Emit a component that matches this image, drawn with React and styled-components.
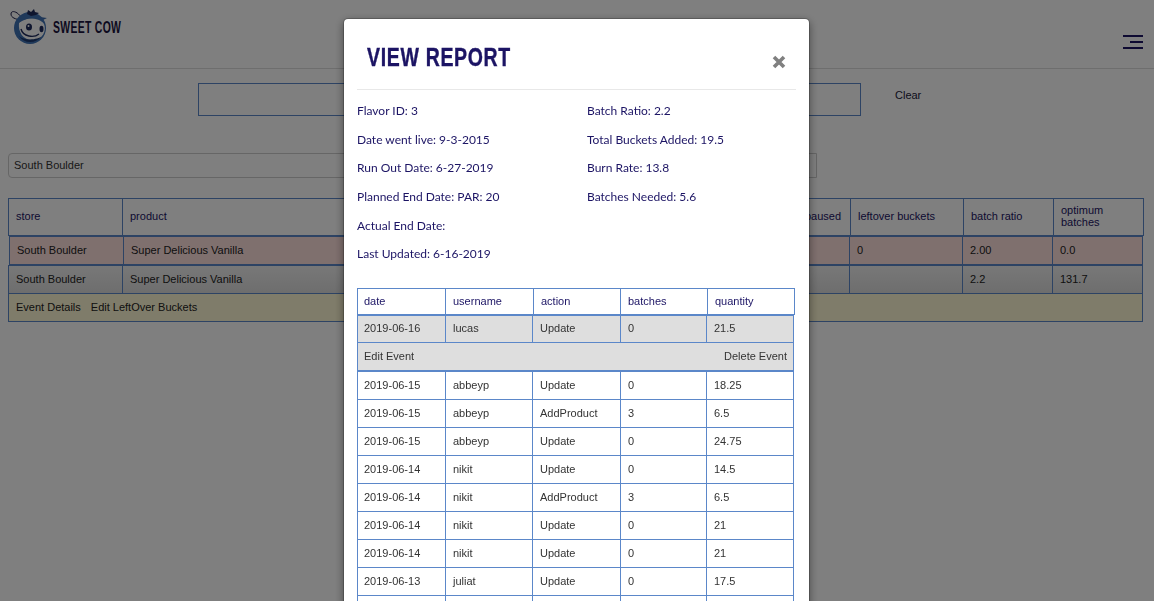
import React from 'react'
import styled, { createGlobalStyle } from 'styled-components'

const reportInfo = [
  ['Flavor ID: 3', 'Batch Ratio: 2.2'],
  ['Date went live: 9-3-2015', 'Total Buckets Added: 19.5'],
  ['Run Out Date: 6-27-2019', 'Burn Rate: 13.8'],
  ['Planned End Date: PAR: 20', 'Batches Needed: 5.6'],
  ['Actual End Date:', ''],
  ['Last Updated: 6-16-2019', ''],
]

const events = [
  ['2019-06-15', 'abbeyp', 'Update', '0', '18.25'],
  ['2019-06-15', 'abbeyp', 'AddProduct', '3', '6.5'],
  ['2019-06-15', 'abbeyp', 'Update', '0', '24.75'],
  ['2019-06-14', 'nikit', 'Update', '0', '14.5'],
  ['2019-06-14', 'nikit', 'AddProduct', '3', '6.5'],
  ['2019-06-14', 'nikit', 'Update', '0', '21'],
  ['2019-06-14', 'nikit', 'Update', '0', '21'],
  ['2019-06-13', 'juliat', 'Update', '0', '17.5'],
  ['', '', '', '', ''],
]

const App = () => {
  return (
    <>
      <GlobalStyle />
      <Header>
        <Logo>
          <CowLogo />
          <LogoText>SWEET COW</LogoText>
        </Logo>
        <Burger aria-label='menu'>
          <span />
          <span />
          <span />
        </Burger>
      </Header>
      <SearchRow>
        <SearchBox />
        <ClearLink>Clear</ClearLink>
      </SearchRow>
      <StoreSelect>South Boulder</StoreSelect>
      <Products>
        <ProductHead>
          <Cell>store</Cell>
          <Cell>product</Cell>
          <Cell>paused</Cell>
          <Cell>leftover buckets</Cell>
          <Cell>batch ratio</Cell>
          <Cell>optimum batches</Cell>
        </ProductHead>
        <ProductRow $inset $bg='#ffe0dd'>
          <Cell>South Boulder</Cell>
          <Cell>Super Delicious Vanilla</Cell>
          <Cell />
          <Cell>0</Cell>
          <Cell>2.00</Cell>
          <Cell>0.0</Cell>
        </ProductRow>
        <ProductRow $bg='linear-gradient(#f0f0f0, #dcdcdc)'>
          <Cell>South Boulder</Cell>
          <Cell>Super Delicious Vanilla</Cell>
          <Cell />
          <Cell />
          <Cell>2.2</Cell>
          <Cell>131.7</Cell>
        </ProductRow>
        <ActionRow>
          <span>Event Details</span>
          <span>Edit LeftOver Buckets</span>
        </ActionRow>
      </Products>

      <Overlay>
        <Modal>
          <ModalHeader>
            <ModalTitle>VIEW REPORT</ModalTitle>
            <CloseButton aria-label='close'>
              <svg width='14' height='14' viewBox='0 0 14 14'>
                <path d='M2 2 L12 12 M12 2 L2 12' stroke='#808080' strokeWidth='3.6' />
              </svg>
            </CloseButton>
          </ModalHeader>
          <InfoGrid>
            {reportInfo.map((row) =>
              row.map((text, i) => <InfoItem key={row[0] + i}>{text}</InfoItem>)
            )}
          </InfoGrid>
          <EventHead>
            <EventCell>date</EventCell>
            <EventCell>username</EventCell>
            <EventCell>action</EventCell>
            <EventCell>batches</EventCell>
            <EventCell>quantity</EventCell>
          </EventHead>
          <EventRow $selected $first>
            <EventCell>2019-06-16</EventCell>
            <EventCell>lucas</EventCell>
            <EventCell>Update</EventCell>
            <EventCell>0</EventCell>
            <EventCell>21.5</EventCell>
          </EventRow>
          <EventActions>
            <span>Edit Event</span>
            <span>Delete Event</span>
          </EventActions>
          {events.map((row, i) => (
            <EventRow key={i} $first={i === 0} $tall={i === 0}>
              {row.map((text, j) => (
                <EventCell key={j}>{text}</EventCell>
              ))}
            </EventRow>
          ))}
        </Modal>
      </Overlay>
    </>
  )
}

const CowLogo = () => (
  <svg width='38' height='38' viewBox='0 0 38 38'>
    <path
      d='M11 9 C7 3 1 2 1 6 C1 10 6 11 10 12'
      fill='none'
      stroke='#1a1c4a'
      strokeWidth='1'
    />
    <path d='M30 9 L37 10 L31 13 Z' fill='#3d6aa8' />
    <circle cx='20' cy='20' r='16' fill='#3f72b4' />
    <path d='M9 15 C13 9 29 9 34 16 C37 23 32 33 22 32 C13 32 8 24 9 15 Z' fill='#fff' />
    <path d='M8 11 C12 5 28 4 32 12 C25 9 14 10 8 16 Z' fill='#3f72b4' />
    <path d='M17 6 L18 2 L21 4 L24 1 L25 4 L29 5 L26 7 L21 8 Z' fill='#1d2a5c' />
    <ellipse cx='19' cy='19' rx='3' ry='3.6' fill='#1d2a5c' />
    <circle cx='18.5' cy='18' r='1' fill='#fff' />
    <ellipse cx='31.5' cy='21' rx='2' ry='3.2' fill='#1d2a5c' />
    <path d='M11 21 C13 29 24 30 29 26' fill='none' stroke='#1d2a5c' strokeWidth='1.4' />
    <path d='M9 28 C14 36 26 36 32 28 C28 32 14 33 9 28 Z' fill='#1d3a70' />
  </svg>
)

const GlobalStyle = createGlobalStyle`
  html, body {
    margin: 0;
    height: 100%;
    overflow: hidden;
    background: #fff;
  }
  body {
    font-family: 'Liberation Sans', Arial, sans-serif;
    font-size: 11px;
    color: #222;
  }
  * {
    box-sizing: border-box;
  }
`

const Header = styled.header`
  display: flex;
  justify-content: space-between;
  align-items: flex-start;
  height: 69px;
  padding: 8px 11px 0 10px;
  border-bottom: 1px solid #ddd;
`
const Logo = styled.div`
  display: flex;
  align-items: center;
  gap: 5px;
  height: 38px;
`
const LogoText = styled.span`
  font-weight: 700;
  font-size: 16px;
  letter-spacing: 0.5px;
  color: #1a1440;
  margin-top: 2px;
  transform: scaleX(0.65);
  transform-origin: left center;
`
const Burger = styled.div`
  display: flex;
  flex-direction: column;
  align-items: flex-end;
  gap: 4px;
  width: 20px;
  margin-top: 27px;
  span {
    display: block;
    width: 100%;
    height: 2px;
    background: #1c1464;
  }
  span:nth-child(2) {
    width: 13px;
  }
`
const SearchRow = styled.div`
  display: flex;
  align-items: flex-start;
  margin-top: 14px;
  padding-left: 198px;
`
const SearchBox = styled.div`
  width: 663px;
  height: 33px;
  border: 1px solid #5b87c9;
`
const ClearLink = styled.span`
  margin: 6px 0 0 34px;
  line-height: 13px;
  color: #1a1a3a;
`
const StoreSelect = styled.div`
  display: flex;
  align-items: center;
  width: 809px;
  height: 25px;
  margin: 37px 0 0 8px;
  padding: 0 0 2px 5px;
  border: 1px solid #ccc;
  border-radius: 4px 0 0 4px;
  color: #333;
`
const Products = styled.section`
  width: 1136px;
  margin: 20px 0 0 8px;
`
const ProductHead = styled.div`
  display: grid;
  grid-template-columns: 113px 1fr 53px 113px 90px 90px;
  height: 38px;
  border: 1px solid #5b87c9;
  color: #1c1464;
  div {
    line-height: 12px;
  }
`
const ProductRow = styled.div`
  display: grid;
  grid-template-columns: 113px 1fr 53px 113px 90px 90px;
  height: 29px;
  margin: 0 1px 0 ${(p) => (p.$inset ? '1px' : '0')};
  border: 1px solid #5b87c9;
  background: ${(p) => p.$bg};
  color: #222;
`
const Cell = styled.div`
  display: flex;
  align-items: center;
  padding: 0 7px 2px;
  border-left: 1px solid #5b87c9;
  &:first-child {
    border-left: 0;
  }
`
const ActionRow = styled.div`
  display: flex;
  align-items: center;
  gap: 10px;
  width: 1135px;
  height: 28px;
  padding: 0 7px 2px;
  border: 1px solid #5b87c9;
  border-top: 0;
  background: #fff9d4;
  color: #222;
`
const Overlay = styled.div`
  position: fixed;
  inset: 0;
  display: flex;
  justify-content: center;
  align-items: flex-start;
  padding: 18px 1px 0 0;
  overflow: hidden;
  background: rgba(0, 0, 0, 0.5);
`
const Modal = styled.div`
  flex: none;
  width: 467px;
  padding: 0 13px;
  background: #fff;
  background-clip: padding-box;
  border: 1px solid rgba(0, 0, 0, 0.2);
  border-radius: 5px;
  box-shadow: 0 3px 9px rgba(0, 0, 0, 0.4);
`
const ModalHeader = styled.div`
  display: flex;
  justify-content: space-between;
  height: 71px;
  padding: 23px 10px 0 10px;
  border-bottom: 1px solid #e8e8e8;
`
const ModalTitle = styled.h2`
  margin: 0;
  font-weight: 700;
  font-size: 26px;
  line-height: 30px;
  letter-spacing: 0.9px;
  color: #1c1464;
  white-space: nowrap;
  -webkit-text-stroke: 0.4px #1c1464;
  transform: scaleX(0.75);
  transform-origin: left center;
`
const CloseButton = styled.div`
  margin-top: 13px;
  line-height: 0;
`
const InfoGrid = styled.div`
  display: grid;
  grid-template-columns: 230px 1fr;
  grid-auto-rows: 28.6px;
  padding-top: 6.4px;
  height: 198px;
`
const InfoItem = styled.div`
  display: flex;
  align-items: center;
  font-family: Lato, 'Open Sans', sans-serif;
  font-size: 12px;
  color: #1c1464;
`
const EventHead = styled.div`
  display: grid;
  grid-template-columns: 87px 88px 87px 87px 1fr;
  width: 438px;
  height: 27px;
  border: 1px solid #5b87c9;
  color: #1c1464;
`
const EventRow = styled.div`
  display: grid;
  grid-template-columns: 87px 87px 88px 86px 1fr;
  width: 437px;
  height: ${(p) => (p.$tall ? '29px' : '28px')};
  border: 1px solid #5b87c9;
  border-top-width: ${(p) => (p.$first ? '1px' : '0')};
  background: ${(p) => (p.$selected ? '#dedede' : '#fff')};
  color: #333;
`
const EventCell = styled.div`
  display: flex;
  align-items: center;
  padding: 0 6px 2px 7px;
  border-left: 1px solid #5b87c9;
  &:first-child {
    border-left: 0;
    padding-left: 6px;
  }
`
const EventActions = styled.div`
  display: flex;
  justify-content: space-between;
  align-items: center;
  width: 437px;
  height: 28px;
  padding: 0 6px 2px;
  border: 1px solid #5b87c9;
  border-top: 0;
  background: #dedede;
  color: #333;
`

export default App
